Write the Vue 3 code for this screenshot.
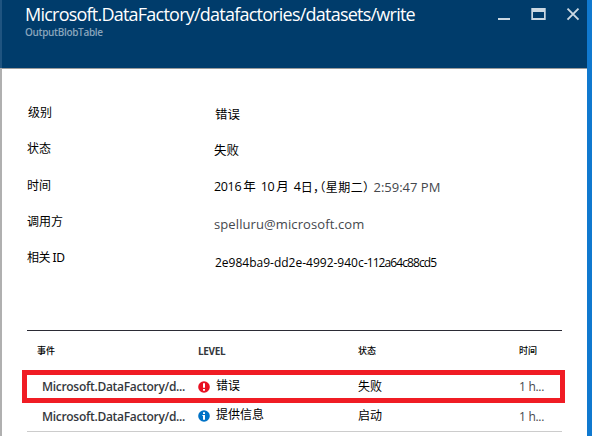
<script setup>
const details = [
  { key: 'level', label: '级别', parts: [{ text: '错误', cls: 'cjk' }] },
  { key: 'status', label: '状态', parts: [{ text: '失败', cls: 'cjk' }] },
  {
    key: 'time',
    label: '时间',
    parts: [
      { text: '2016', cls: 'num' },
      { text: '年', cls: 'year' },
      { text: '10', cls: 'num' },
      { text: '月', cls: 'month' },
      { text: '4', cls: 'num' },
      { text: '日，（星期二）', cls: 'day' },
      { text: '2:59:47 PM', cls: 'latin clock' },
    ],
  },
  { key: 'caller', label: '调用方', parts: [{ text: 'spelluru@microsoft.com', cls: 'latin mail' }] },
  {
    key: 'corr',
    label: '相关 ID',
    parts: [
      { text: '2e984ba9-dd2e-4992-940c', cls: 'guid' },
      { text: '-112a64c88cd5', cls: 'guid tight' },
    ],
  },
]
const events = [
  { op: 'Microsoft.DataFactory/d...', icon: 'error', level: '错误', status: '失败', time: '1 h...' },
  { op: 'Microsoft.DataFactory/d...', icon: 'info', level: '提供信息', status: '启动', time: '1 h...' },
]
</script>

<template>
  <div class="screen">
    <div class="edge"></div>
    <main class="blade">
      <header class="head">
        <div>
          <h1 class="title">Microsoft.DataFactory/datafactories/datasets/write</h1>
          <p class="subtitle">OutputBlobTable</p>
        </div>
        <div class="controls">
          <svg width="86" height="16" viewBox="0 0 86 16" fill="#cbd8e2">
            <rect x="0" y="12" width="12" height="2" />
            <path fill-rule="evenodd" d="M33.3 2h14.4v12H33.3zM35 6v6h11V6z" />
            <path d="M69.5 2.6L80.5 13.6M80.5 2.6L69.5 13.6" stroke="#cbd8e2" stroke-width="1.9" />
          </svg>
        </div>
      </header>

      <dl class="details">
        <div v-for="d in details" :key="d.key" class="detail" :class="d.key">
          <dt>{{ d.label }}</dt>
          <dd><span v-for="(p, i) in d.parts" :key="i" :class="p.cls">{{ p.text }}</span></dd>
        </div>
      </dl>

      <section class="table">
        <div class="row labels">
          <span class="c1">事件</span>
          <span class="c2">LEVEL</span>
          <span class="c3">状态</span>
          <span class="c4">时间</span>
        </div>
        <div v-for="e in events" :key="e.icon" class="row event" :class="e.icon">
          <span class="c1">{{ e.op }}</span>
          <span class="c2">
            <svg width="12" height="12" viewBox="0 0 12 12">
              <circle cx="6" cy="6" r="5.8" :fill="e.icon === 'error' ? '#e81123' : '#0072c6'" />
              <path v-if="e.icon === 'error'" d="M5 2.2h2v4.6H5zM5 8h2v1.8H5z" fill="#fff" />
              <path v-else d="M5 2.2h2V4H5zM4.4 5H7v4.8H5V6h-.6z" fill="#fff" />
            </svg>
            <b>{{ e.level }}</b>
          </span>
          <span class="c3">{{ e.status }}</span>
          <span class="c4">{{ e.time }}</span>
        </div>
      </section>
    </main>
    <div class="backdrop"></div>
  </div>
</template>

<style>
body {
  margin: 0;
  background: #fff;
  overflow: hidden;
}
</style>

<style scoped>
.screen {
  display: grid;
  grid-template-columns: 2px 585px 5px;
  width: 592px;
  height: 436px;
  overflow: hidden;
  background: #fff;
  color: #000;
  font-family: "Noto Sans", "Noto Sans CJK SC", sans-serif;
}
.edge {
  background: linear-gradient(#1f5480 0 68px, #b0b0b0 68px);
}
.backdrop {
  background: #1079cf;
}
.blade {
  min-width: 0;
}
.head {
  box-sizing: border-box;
  display: flex;
  justify-content: space-between;
  height: 69px;
  padding: 0 0 0 23px;
  background: #003c6b;
  border-bottom: 1px solid #9b9b9b;
  white-space: nowrap;
}
.title {
  margin: 2px 0 0;
  color: #fff;
  font: 400 18px/24px "Open Sans", sans-serif;
  letter-spacing: -0.77px;
}
.subtitle {
  margin: -1px 0 0;
  color: #89a5bc;
  font: 600 10px/14px "Open Sans", sans-serif;
  letter-spacing: -0.33px;
}
.controls {
  width: 89px;
  padding-top: 5px;
}
.details {
  margin: 0;
  padding: 26px 0 0 25px;
}
.detail {
  display: grid;
  grid-template-columns: 187px 1fr;
  height: 36.3px;
  line-height: 36px;
  white-space: nowrap;
}
dt {
  font-size: 12px;
}
.level dt {
  padding-left: 1px;
}
dd {
  display: flex;
  margin: 1.5px 0 0;
  font-size: 12.5px;
}
.level dd {
  margin: 2px 0 0 1px;
}
.status dd {
  margin-top: 2px;
}
.time dd {
  margin-top: 1px;
}
.caller dd {
  margin-top: 2.5px;
}
.corr dt {
  letter-spacing: -0.5px;
}
.corr dd {
  margin: 5px 0 0 1px;
}
.num {
  font-family: "Open Sans", sans-serif;
  letter-spacing: -0.35px;
}
.year {
  margin: 0 5px 0 2px;
}
.month {
  margin: 0 5px 0 2px;
}
.day {
  font-size: 12px;
  font-family: "Noto Sans CJK SC", sans-serif;
  font-feature-settings: "halt";
  letter-spacing: 0.4px;
}
.latin {
  color: #45484d;
  font-family: "Open Sans", sans-serif;
  font-size: 13px;
}
.clock {
  margin-left: 4px;
}
.mail {
  letter-spacing: 0.1px;
}
.guid {
  font-family: "Open Sans", sans-serif;
  font-size: 12px;
}
.tight {
  letter-spacing: -0.9px;
}
.table {
  margin: 54px 25px 0;
  border-top: 1px solid #2b2b35;
}
.row {
  display: grid;
  grid-template-columns: 171px 160px 161px 43px;
  align-items: center;
  white-space: nowrap;
}
.labels {
  height: 39px;
  font-size: 9px;
  font-weight: 500;
}
.labels .c1 {
  padding-left: 10px;
}
.labels .c2 {
  color: #35383d;
  font: 700 10px "Open Sans", sans-serif;
  letter-spacing: -0.35px;
}
.event {
  box-sizing: border-box;
  font-size: 12px;
}
.event .c1 {
  padding-left: 15px;
  color: #35383d;
  font: 600 12px "Open Sans", sans-serif;
  letter-spacing: -0.3px;
}
.event .c2 {
  display: flex;
  align-items: center;
  gap: 6px;
}
.event b {
  padding-bottom: 4px;
  font-weight: 400;
}
.event .c3 {
  padding-bottom: 2px;
}
.event .c4 {
  color: #45484d;
  font-family: "Open Sans", sans-serif;
  letter-spacing: -0.3px;
}
.error {
  height: 33px;
  margin: 0 -3px 0 -5px;
  border: 5px solid #f01c24;
}
.info {
  height: 29px;
  padding-bottom: 2px;
  border-bottom: 1px solid #ccc;
}
</style>
